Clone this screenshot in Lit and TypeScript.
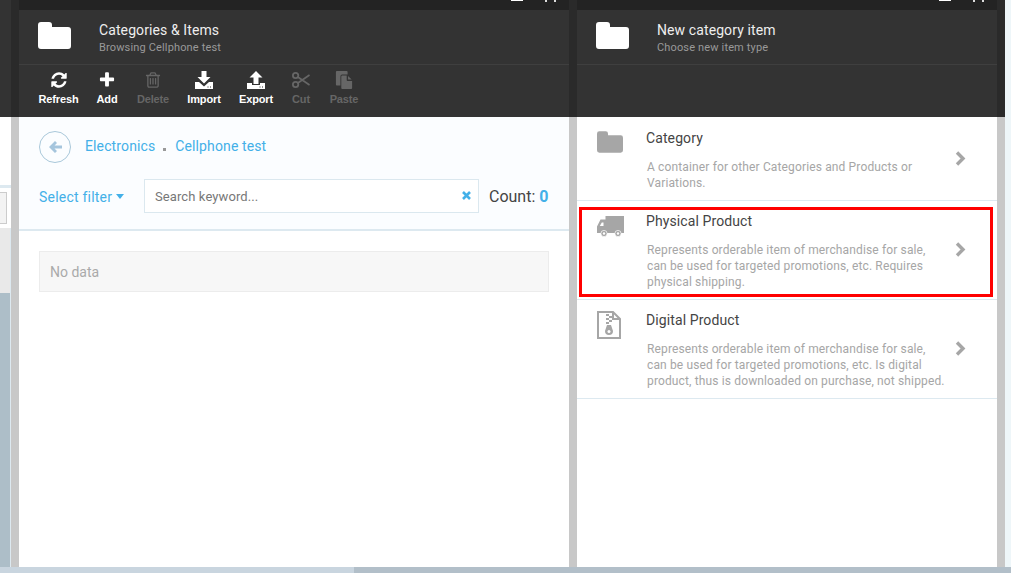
import { LitElement, html, css, svg } from 'lit';
import { customElement } from 'lit/decorators.js';

const fa = (d: string) => svg`<svg class="ico" viewBox="0 0 1792 1792"><path fill="currentColor" d=${d}></path></svg>`;

const folder = svg`<svg class="folder" viewBox="0 0 33 27"><path fill="currentColor" d="M3 0h8a3 3 0 0 1 3 3v2h16a3 3 0 0 1 3 3v16a3 3 0 0 1-3 3H3a3 3 0 0 1-3-3V3a3 3 0 0 1 3-3z"></path></svg>`;

const tools = [
  {
    label: 'Refresh',
    width: 39,
    icon: fa('M1639 1056q0 5-1 7-64 268-268 434.5t-478 166.5q-146 0-282.5-55t-243.5-157l-129 129q-19 19-45 19t-45-19-19-45v-448q0-26 19-45t45-19h448q26 0 45 19t19 45-19 45l-137 137q71 66 161 102t187 36q134 0 250-65t186-179q11-17 53-117 8-23 30-23h192q13 0 22.5 9.5t9.5 22.5zm25-800v448q0 26-19 45t-45 19h-448q-26 0-45-19t-19-45 19-45l138-138q-148-137-349-137-134 0-250 65t-186 179q-11 17-53 117-8 23-30 23h-199q-13 0-22.5-9.5t-9.5-22.5v-7q65-268 270-434.5t480-166.5q146 0 284 55.5t245 156.5l130-129q19-19 45-19t45 19 19 45z'),
  },
  {
    label: 'Add',
    width: 58,
    icon: fa('M1600 736v192q0 40-28 68t-68 28h-416v416q0 40-28 68t-68 28h-192q-40 0-68-28t-28-68v-416h-416q-40 0-68-28t-28-68v-192q0-40 28-68t68-28h416v-416q0-40 28-68t68-28h192q40 0 68 28t28 68v416h416q40 0 68 28t28 68z'),
  },
  {
    label: 'Delete',
    width: 34,
    off: true,
    icon: fa('M704 736v576q0 14-9 23t-23 9h-64q-14 0-23-9t-9-23v-576q0-14 9-23t23-9h64q14 0 23 9t9 23zm256 0v576q0 14-9 23t-23 9h-64q-14 0-23-9t-9-23v-576q0-14 9-23t23-9h64q14 0 23 9t9 23zm256 0v576q0 14-9 23t-23 9h-64q-14 0-23-9t-9-23v-576q0-14 9-23t23-9h64q14 0 23 9t9 23zm128 724v-948h-896v948q0 22 7 40.5t14.5 27 10.5 8.5h832q3 0 10.5-8.5t14.5-27 7-40.5zm-672-1076h448l-48-117q-7-9-17-11h-317q-10 2-17 11zm928 32v64q0 14-9 23t-23 9h-96v948q0 83-47 143.5t-113 60.5h-832q-66 0-113-58.5t-47-141.5v-952h-96q-14 0-23-9t-9-23v-64q0-14 9-23t23-9h309l70-167q15-37 54-63t79-26h320q40 0 79 26t54 63l70 167h309q14 0 23 9t9 23z'),
  },
  {
    label: 'Import',
    width: 68,
    icon: svg`<svg class="ico" viewBox="0 0 18 18"><path fill="currentColor" d="M6.500 0h5v6h4l-6.500 6.500L2.500 6h4z"></path><path fill="currentColor" d="M0 11h4l5 4.500 5-4.500h4v7H0z"></path><path fill="#333" d="M12.500 15.500h1v1h-1zM15 15.500h1v1h-1z"></path></svg>`,
  },
  {
    label: 'Export',
    width: 36,
    icon: svg`<svg class="ico" viewBox="0 0 18 18"><path fill="currentColor" d="M9 0l6.500 6.500h-4V13h-5V6.500h-4z"></path><path fill="currentColor" d="M0 12h5v2h8v-2h5v6H0z"></path><path fill="#333" d="M12.500 15.500h1v1h-1zM15 15.500h1v1h-1z"></path></svg>`,
  },
  {
    label: 'Cut',
    width: 54,
    off: true,
    icon: svg`<svg class="ico" viewBox="0 0 20 18"><g fill="none" stroke="currentColor" stroke-width="2"><circle cx="4" cy="4" r="3"></circle><circle cx="4" cy="14" r="3"></circle><path d="M6.500 5.800L19.500 14.500M6.500 12.200L19.500 3.500"></path></g></svg>`,
  },
  {
    label: 'Paste',
    width: 32,
    off: true,
    icon: svg`<svg class="ico" viewBox="0 0 18 20"><path fill="currentColor" d="M1 0h11a1 1 0 0 1 1 1v3H7a2 2 0 0 0-2 2v10H1a1 1 0 0 1-1-1V1a1 1 0 0 1 1-1z"></path><path fill="currentColor" d="M7 5h5v5a1 1 0 0 0 1 1h5v8a1 1 0 0 1-1 1H7a1 1 0 0 1-1-1V6a1 1 0 0 1 1-1z"></path><path fill="currentColor" d="M13.500 5.500L17.500 9.500H13.500z"></path></svg>`,
  },
];

const truck = svg`<svg class="truck" viewBox="0 0 27 21"><path fill="currentColor" d="M8.500 0H27v17H8.500zM9 3.500V17H0v-6.500L3.500 3.500z"></path><path fill="#fff" d="M2.800 10l2-3.500h1.700V10z"></path><circle cx="7" cy="17.500" r="3.100" fill="currentColor" stroke="#fff" stroke-width="0.700"></circle><circle cx="21" cy="17.500" r="3.100" fill="currentColor" stroke="#fff" stroke-width="0.700"></circle><circle cx="7" cy="17.500" r="1.200" fill="#fff"></circle><circle cx="21" cy="17.500" r="1.200" fill="#fff"></circle></svg>`;

const zip = svg`<svg class="zip" viewBox="0 0 24 28"><path fill="none" stroke="currentColor" stroke-width="2" d="M1 1h15l7 7v19H1z"></path><path fill="currentColor" d="M15 1h2v6h6v2h-8z"></path><path fill="currentColor" d="M9 3h3v2H9zM12 5h3v2h-3zM9 7h3v2H9zM12 9h3v2h-3zM9 11h3v2H9z"></path><path fill="currentColor" d="M10 14h4l2 6a4 4 0 1 1-8 0z"></path><circle cx="12" cy="20.500" r="1.500" fill="#fff"></circle></svg>`;

const items = [
  {
    title: 'Category',
    icon: svg`<svg class="folder small" viewBox="0 0 33 27"><path fill="currentColor" d="M3 0h8a3 3 0 0 1 3 3v2h16a3 3 0 0 1 3 3v16a3 3 0 0 1-3 3H3a3 3 0 0 1-3-3V3a3 3 0 0 1 3-3z"></path></svg>`,
    text: ['A container for other Categories and Products or', 'Variations.'],
    cls: 'short',
  },
  {
    title: 'Physical Product',
    icon: truck,
    text: ['Represents orderable item of merchandise for sale,', 'can be used for targeted promotions, etc. Requires', 'physical shipping.'],
    cls: 'marked',
  },
  {
    title: 'Digital Product',
    icon: zip,
    text: ['Represents orderable item of merchandise for sale,', 'can be used for targeted promotions, etc. Is digital', 'product, thus is downloaded on purchase, not shipped.'],
    cls: '',
  },
];

@customElement('app-root')
export class AppRoot extends LitElement {
  static styles = css`
    :host {
      display: flex;
      flex-direction: column;
      height: 100vh;
      overflow: hidden;
      background: #eef6f9;
      font-family: 'Roboto', 'Noto Sans', sans-serif;
      color: #444;
    }
    .blades { flex: 1; display: flex; min-height: 0; }
    .scrollbar { height: 6px; background: #b2bfc9; flex: none; }
    .scrollbar div { width: 354px; height: 100%; background: #c9d5df; }

    .sliver { width: 11px; display: flex; flex-direction: column; background: #fff; overflow: hidden; }
    .sliver .dark { height: 117px; flex: none; }
    .sliver .band { height: 68px; flex: none; }
    .sliver .edge { height: 3px; background: #dde9f0; flex: none; }
    .sliver .rowcell { height: 40px; flex: none; padding: 4px 4px 4px 0; box-sizing: border-box; background: #fff; }
    .sliver .rowcell div { height: 32px; border: 1px solid #ccc; border-left: 0; background: #f3f3f3; box-sizing: border-box; }
    .sliver .grey { height: 65px; flex: none; background: #e9e9e9; border-right: 1px solid #dde9f0; }
    .sliver .steel { flex: 1; background: #adbec8; border-right: 1px solid #dde9f0; }

    .gutter { width: 8px; flex: none; display: flex; flex-direction: column; background: #c8c8c8; }
    .gutter::before { content: ''; height: 117px; background: #2a2a2a; }

    .blade { display: flex; flex-direction: column; background: #fff; flex: none; position: relative; }
    .left { width: 550px; }
    .right { width: 420px; }
    .dark { background: #333; }
    .topbar { height: 10px; background: #232323; flex: none; }
    .winctl { display: flex; justify-content: flex-end; gap: 22px; padding-right: 13px; }
    .winctl span { display: block; width: 12px; height: 1px; background: #fff; }
    .winctl span + span { background: none; border-left: 2px solid #ddd; border-right: 2px solid #ddd; height: 2px; width: 7px; }
    .head { height: 55px; flex: none; box-sizing: border-box; display: flex; align-items: center; background: #333; border-bottom: 1px solid #3f3f3f; padding-left: 19px; color: #fff; }
    .folder { width: 33px; height: 27px; display: block; }
    .head .folder { margin-bottom: 3px; }
    .head-text { margin-left: 28px; margin-top: 1px; }
    .head-title { font-size: 14px; line-height: 18px; color: #eee; letter-spacing: 0.1px; }
    .head-sub { font-size: 11px; line-height: 14px; color: #999; margin-top: 2px; letter-spacing: 0.15px; }
    .toolbar { height: 52px; flex: none; background: #333; display: flex; padding-left: 20px; }
    .tool { display: flex; flex-direction: column; align-items: center; color: #fff; padding-top: 6px; box-sizing: border-box; }
    .tool.off { color: #666; }
    .ico { width: 18px; height: 18px; display: block; }
    .tool-label { font: bold 11px/14px 'Liberation Sans', sans-serif; margin-top: 3px; letter-spacing: -0.15px; white-space: nowrap; }

    .browse { height: 114px; flex: none; box-sizing: border-box; background: #fbfdff; border-bottom: 2px solid #dde9f0; padding: 14px 20px 0; }
    .crumbs { display: flex; align-items: center; height: 32px; color: #43b0e8; font-size: 14px; letter-spacing: 0.12px; }
    .crumbs span { margin-top: -3px; }
    .back { width: 32px; height: 32px; box-sizing: border-box; border: 1px solid #a9c8da; border-radius: 50%; display: flex; align-items: center; justify-content: center; margin-right: 14px; }
    .back svg { width: 13px; height: 12px; color: #a5c5dd; }
    .crumbs .dot { width: 3px; height: 3px; background: #999; margin: 4px 9px 0 8px; }
    .filter { display: flex; align-items: center; margin-top: 16px; height: 34px; }
    .select { width: 105px; display: flex; align-items: center; color: #43b0e8; font-size: 14px; flex: none; letter-spacing: 0.22px; padding-top: 1px; }
    .caret { width: 0; height: 0; border: 4px solid transparent; border-top: 5px solid #43b0e8; border-bottom: 0; margin-left: 4px; }
    .search { width: 335px; height: 34px; box-sizing: border-box; flex: none; background: #fff; border: 1px solid #dbe8ef; display: flex; align-items: center; justify-content: space-between; padding: 0 7px 0 10px; font-size: 13px; color: #777; letter-spacing: 0.1px; }
    .search svg { width: 9px; height: 9px; color: #43b0e8; margin-bottom: 2px; }
    .count { margin-left: 10px; font-size: 16px; color: #444; white-space: nowrap; padding-top: 1px; }
    .count b { color: #43b0e8; font-weight: 700; }
    .empty { margin: 20px 20px 0; height: 41px; box-sizing: border-box; background: #f7f7f7; border: 1px solid #ececec; padding: 1px 0 0 10px; display: flex; align-items: center; font-size: 14px; color: #aaa; }

    .item { display: flex; height: 99px; box-sizing: border-box; border-bottom: 1px solid #dde9f0; position: relative; color: #a6a6a6; }
    .item.short { height: 84px; }
    .item .glyph { width: 69px; flex: none; box-sizing: border-box; padding: 14px 0 0 20px; }
    .small { width: 26px; height: 22px; }
    .truck { width: 27px; height: 21px; display: block; margin-top: 1px; }
    .zip { width: 24px; height: 28px; display: block; margin-top: -3px; }
    .item-body { flex: 1; padding-top: 10px; }
    .short .item-body { padding-top: 11px; }
    .item-title { font-size: 14px; line-height: 20px; color: #444; letter-spacing: 0.1px; }
    .item-text { font-size: 12px; line-height: 16px; color: #a6a6a6; margin-top: 11px; padding-left: 1px; white-space: nowrap; letter-spacing: 0.14px; }
    .chev { width: 13px; height: 15px; flex: none; margin: 41px 30px 0 0; color: #a6a6a6; }
    .short .chev { margin-top: 34px; }
    .item.marked::after { content: ''; position: absolute; left: 2px; width: 414px; top: 6px; height: 90px; box-sizing: border-box; border: 3px solid #f00; }
  `;

  blade(title: string, sub: string, tb: unknown) {
    return html`
      <div class="topbar winctl"><span></span><span></span></div>
      <div class="head">
        ${folder}
        <div class="head-text">
          <div class="head-title">${title}</div>
          <div class="head-sub">${sub}</div>
        </div>
      </div>
      <div class="toolbar">${tb}</div>
    `;
  }

  render() {
    const toolbar = tools.map((t) => html`
      <div class="tool ${t.off ? 'off' : ''}" style="width:${t.width}px">
        ${t.icon}
        <div class="tool-label">${t.label}</div>
      </div>
    `);
    return html`
      <div class="blades">
        <div class="sliver">
          <div class="dark"></div>
          <div class="band"></div>
          <div class="edge"></div>
          <div class="rowcell"><div></div></div>
          <div class="grey"></div>
          <div class="steel"></div>
        </div>
        <div class="gutter"></div>
        <div class="blade left">
          ${this.blade('Categories & Items', 'Browsing Cellphone test', toolbar)}
          <div class="browse">
            <div class="crumbs">
              <div class="back">
                <svg viewBox="0 0 13 12"><path fill="currentColor" d="M6 0l2 2-2.500 2.500H13v3H5.500L8 10l-2 2-6-6z"></path></svg>
              </div>
              <span>Electronics</span><span class="dot"></span><span>Cellphone test</span>
            </div>
            <div class="filter">
              <div class="select">Select filter<span class="caret"></span></div>
              <div class="search">
                <span>Search keyword...</span>
                <svg viewBox="0 0 9 9"><path fill="none" stroke="currentColor" stroke-width="2.600" d="M1 1l7 7M8 1l-7 7"></path></svg>
              </div>
              <div class="count">Count: <b>0</b></div>
            </div>
          </div>
          <div class="empty">No data</div>
        </div>
        <div class="gutter"></div>
        <div class="blade right">
          ${this.blade('New category item', 'Choose new item type', '')}
          ${items.map((it) => html`
            <div class="item ${it.cls}">
              <div class="glyph">${it.icon}</div>
              <div class="item-body">
                <div class="item-title">${it.title}</div>
                <div class="item-text">${it.text.map((l) => html`<div>${l}</div>`)}</div>
              </div>
              <svg class="chev" viewBox="0 0 13 15"><path fill="none" stroke="currentColor" stroke-width="3.400" d="M3 1.500l6 6-6 6"></path></svg>
            </div>
          `)}
        </div>
        <div class="gutter"></div>
      </div>
      <div class="scrollbar"><div></div></div>
    `;
  }
}
